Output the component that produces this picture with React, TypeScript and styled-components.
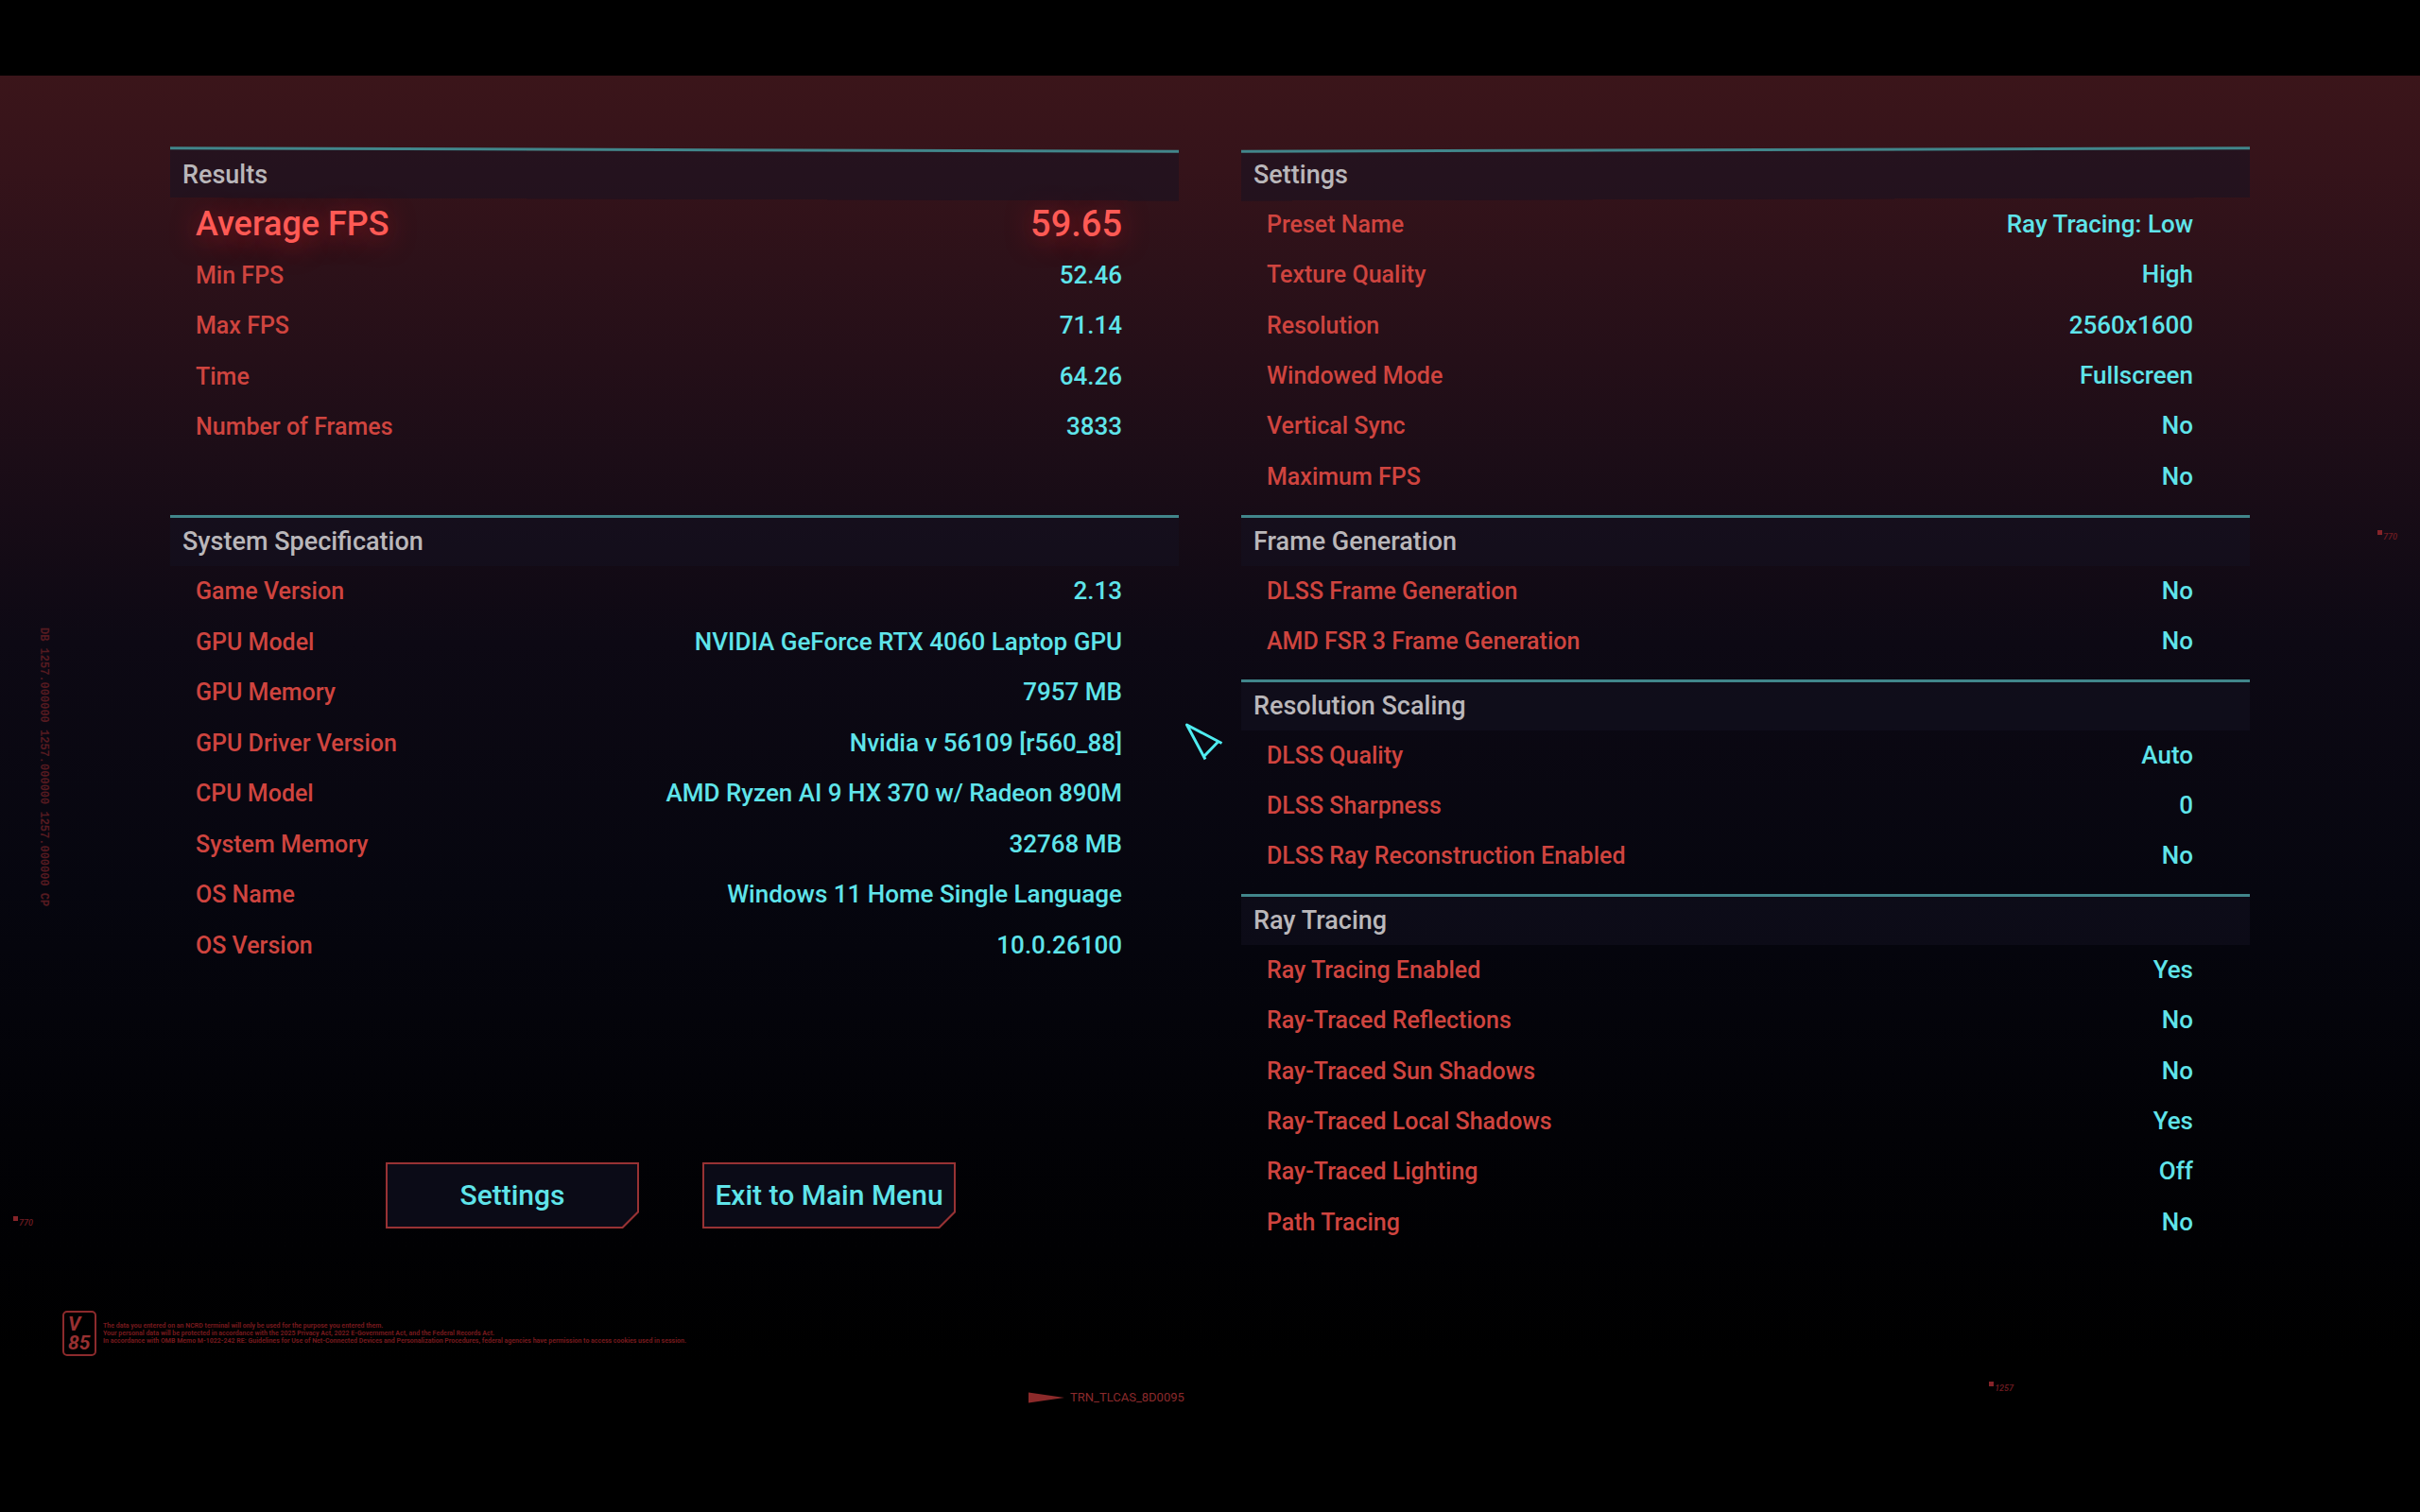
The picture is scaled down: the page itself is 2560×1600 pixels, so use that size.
import React from "react";
import styled, { createGlobalStyle } from "styled-components";

const GlobalStyle = createGlobalStyle`
  * { box-sizing: border-box; }
  body { margin: 0; background: #000; }
`;

const Screen = styled.div`
  min-height: 100vh;
  padding-top: 80px;
  display: flex;
  flex-direction: column;
  background: #000;
  font-family: Roboto, "Liberation Sans", sans-serif;
`;

const Stage = styled.main`
  position: relative;
  flex: 1;
  display: flex;
  flex-direction: column;
  padding-top: 77px;
  background: linear-gradient(
    180deg,
    #3b151a 0,
    #35131a 100px,
    #1c0d17 400px,
    #0d0914 600px,
    #06060f 860px,
    #020206 1120px,
    #000 1360px
  );
`;

const Columns = styled.div`
  display: grid;
  grid-template-columns: 1fr 1fr;
  gap: 66px;
  padding: 0 180px;
`;

const Column = styled.div`
  display: flex;
  flex-direction: column;
  gap: 14px;
`;

type Side = "left" | "right";

const PanelTitle = styled.h2<{ $lean: number }>`
  position: relative;
  z-index: 0;
  height: 54px;
  margin: 0;
  padding: 3px 13px 0;
  line-height: 51px;
  font-size: 27px;
  font-weight: 500;
  color: #bab7ba;

  &::before {
    content: "";
    position: absolute;
    inset: 0;
    z-index: -1;
    border-top: 3px solid #41868b;
    background: rgba(20, 18, 34, 0.5);
    background-clip: padding-box;
    transform: skewY(${(p) => p.$lean}deg);
  }
`;

const Rows = styled.dl<{ $height: number; $tail: number }>`
  display: grid;
  align-content: stretch;
  margin: 0 0 ${(p) => p.$tail}px;
  min-height: ${(p) => p.$height}px;
`;

const Row = styled.div<{ $highlight?: boolean }>`
  display: flex;
  justify-content: space-between;
  padding: 0 60px 0 27px;
  line-height: 53px;
  font-weight: 500;
  text-shadow: ${(p) => (p.$highlight ? "0 4px 28px rgba(255, 30, 40, 0.5)" : "none")};

  dt {
    font-size: ${(p) => (p.$highlight ? 36 : 25)}px;
    color: ${(p) => (p.$highlight ? "#ff5a55" : "#cf443f")};
  }
  dd {
    margin: 0;
    font-size: ${(p) => (p.$highlight ? 38 : 26)}px;
    color: ${(p) => (p.$highlight ? "#ff5a55" : "#5fe4ea")};
  }
`;

const Actions = styled.div`
  display: flex;
  gap: 67px;
  margin-top: auto;
  padding: 0 0 20px 228px;
`;

const ActionButton = styled.button`
  position: relative;
  z-index: 0;
  width: 268px;
  height: 70px;
  padding: 0 0 2px;
  border: 0;
  white-space: nowrap;
  font: 500 30px Roboto, "Liberation Sans", sans-serif;
  color: #5fe4ea;
  background: #983234;
  clip-path: polygon(0 0, 100% 0, 100% calc(100% - 17px), calc(100% - 17px) 100%, 0 100%);
  cursor: pointer;

  &::before {
    content: "";
    position: absolute;
    inset: 2px;
    z-index: -1;
    background: #0b0b17;
    clip-path: polygon(0 0, 100% 0, 100% calc(100% - 16px), calc(100% - 16px) 100%, 0 100%);
  }
`;

const Legal = styled.footer`
  display: flex;
  align-items: center;
  gap: 7px;
  margin-top: 67px;
  padding-left: 66px;
`;

const Badge = styled.div`
  width: 36px;
  height: 48px;
  padding: 2px 4px;
  border: 2px solid #8c2a2c;
  border-radius: 5px;
  font-size: 21px;
  line-height: 20px;
  font-weight: 700;
  font-style: italic;
  color: #983031;
`;

const LegalText = styled.p`
  margin: 0;
  font-size: 7px;
  line-height: 8px;
  font-weight: 700;
  color: #74191d;
`;

const Marker = styled.div`
  display: flex;
  align-items: center;
  gap: 6px;
  margin-top: 36px;
  padding-left: 42.5%;
  font-size: 13px;
  line-height: 16px;
  color: #8c2a2c;
`;

const SideCode = styled.div`
  position: absolute;
  left: 38px;
  top: 584px;
  writing-mode: vertical-rl;
  font-family: "Liberation Mono", monospace;
  font-size: 12px;
  line-height: 16px;
  font-weight: 700;
  color: #551a20;
`;

const Tag = styled.div`
  position: absolute;
  display: flex;
  gap: 1px;
  font-size: 9px;
  line-height: 14px;
  font-weight: 500;
  font-style: italic;
  color: #701c22;

  &::before {
    content: "";
    width: 5px;
    height: 5px;
    background: #862429;
  }
`;

const TagEast = styled(Tag)`
  right: 24px;
  top: 481px;
`;

const TagWest = styled(Tag)`
  left: 14px;
  top: 1207px;
`;

const TagSouth = styled(Tag)`
  right: 430px;
  top: 1382px;
`;

const Pointer = styled.svg`
  position: absolute;
  left: 49%;
  top: 684px;
`;

interface Entry {
  label: string;
  value: string;
  highlight?: boolean;
}

interface PanelData {
  title: string;
  height: number;
  tail?: number;
  entries: Entry[];
}

const results: PanelData = {
  title: "Results",
  height: 268,
  tail: 52,
  entries: [
    { label: "Average FPS", value: "59.65", highlight: true },
    { label: "Min FPS", value: "52.46" },
    { label: "Max FPS", value: "71.14" },
    { label: "Time", value: "64.26" },
    { label: "Number of Frames", value: "3833" },
  ],
};

const system: PanelData = {
  title: "System Specification",
  height: 428,
  entries: [
    { label: "Game Version", value: "2.13" },
    { label: "GPU Model", value: "NVIDIA GeForce RTX 4060 Laptop GPU" },
    { label: "GPU Memory", value: "7957 MB" },
    { label: "GPU Driver Version", value: "Nvidia v 56109 [r560_88]" },
    { label: "CPU Model", value: "AMD Ryzen AI 9 HX 370 w/ Radeon 890M" },
    { label: "System Memory", value: "32768 MB" },
    { label: "OS Name", value: "Windows 11 Home Single Language" },
    { label: "OS Version", value: "10.0.26100" },
  ],
};

const options: PanelData[] = [
  {
    title: "Settings",
    height: 320,
    entries: [
      { label: "Preset Name", value: "Ray Tracing: Low" },
      { label: "Texture Quality", value: "High" },
      { label: "Resolution", value: "2560x1600" },
      { label: "Windowed Mode", value: "Fullscreen" },
      { label: "Vertical Sync", value: "No" },
      { label: "Maximum FPS", value: "No" },
    ],
  },
  {
    title: "Frame Generation",
    height: 106,
    entries: [
      { label: "DLSS Frame Generation", value: "No" },
      { label: "AMD FSR 3 Frame Generation", value: "No" },
    ],
  },
  {
    title: "Resolution Scaling",
    height: 159,
    entries: [
      { label: "DLSS Quality", value: "Auto" },
      { label: "DLSS Sharpness", value: "0" },
      { label: "DLSS Ray Reconstruction Enabled", value: "No" },
    ],
  },
  {
    title: "Ray Tracing",
    height: 320,
    entries: [
      { label: "Ray Tracing Enabled", value: "Yes" },
      { label: "Ray-Traced Reflections", value: "No" },
      { label: "Ray-Traced Sun Shadows", value: "No" },
      { label: "Ray-Traced Local Shadows", value: "Yes" },
      { label: "Ray-Traced Lighting", value: "Off" },
      { label: "Path Tracing", value: "No" },
    ],
  },
];

/* The curved-screen look: only the header bars along the top edge lean. */
const leanFor = (side: Side, title: string) => {
  const amount = title === "Results" || title === "Settings" ? 0.18 : 0;
  return side === "left" ? amount : -amount;
};

function Panel({ panel, side }: { panel: PanelData; side: Side }) {
  return (
    <section>
      <PanelTitle $lean={leanFor(side, panel.title)}>{panel.title}</PanelTitle>
      <Rows $height={panel.height} $tail={panel.tail ?? 0}>
        {panel.entries.map((e) => (
          <Row key={e.label} $highlight={e.highlight}>
            <dt>{e.label}</dt>
            <dd>{e.value}</dd>
          </Row>
        ))}
      </Rows>
    </section>
  );
}

export default function App() {
  return (
    <Screen>
      <GlobalStyle />
      <Stage>
        <Columns>
          <Column>
            <Panel panel={results} side="left" />
            <Panel panel={system} side="left" />
            <Actions>
              <ActionButton type="button">Settings</ActionButton>
              <ActionButton type="button">Exit to Main Menu</ActionButton>
            </Actions>
          </Column>
          <Column>
            {options.map((p) => (
              <Panel key={p.title} panel={p} side="right" />
            ))}
          </Column>
        </Columns>

        <Legal>
          <Badge>
            V<br />
            85
          </Badge>
          <LegalText>
            The data you entered on an NCRD terminal will only be used for the purpose you entered them.
            <br />
            Your personal data will be protected in accordance with the 2025 Privacy Act, 2022 E-Government Act, and the
            Federal Records Act.
            <br />
            In accordance with OMB Memo M-1022-242 RE: Guidelines for Use of Net-Connected Devices and Personalization
            Procedures, federal agencies have permission to access cookies used in session.
          </LegalText>
        </Legal>

        <Marker>
          <svg width="38" height="12" viewBox="0 0 38 12" aria-hidden="true">
            <path d="M0 0.5 L38 6 L0 11.5 Z" fill="#8c2a2a" />
          </svg>
          TRN_TLCAS_8D0095
        </Marker>

        <SideCode>DB 1257.000000 1257.000000 1257.000000 CP</SideCode>
        <TagEast>770</TagEast>
        <TagWest>770</TagWest>
        <TagSouth>1257</TagSouth>

        <Pointer width="42" height="42" viewBox="0 0 42 42" aria-hidden="true">
          <path
            d="M38.5 22.5 L1.5 3 L21 39.5 M20 36 L35 20.5"
            fill="none"
            stroke="#4fecf0"
            strokeWidth="3"
            strokeLinejoin="round"
          />
        </Pointer>
      </Stage>
    </Screen>
  );
}
